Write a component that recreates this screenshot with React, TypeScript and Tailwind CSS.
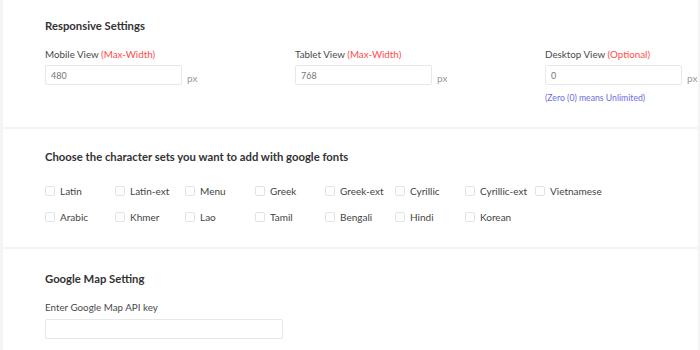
import React from "react";

const font = { fontFamily: 'Lato, "Noto Sans", sans-serif' };

function Field({ label, note, value, hint }: { label: string; note: string; value: string; hint?: string }) {
  return (
    <div className="w-[250px] shrink-0">
      <div className="text-[9.8px] leading-[16px] text-[#4a4a4a]">
        {label} <span className="text-[#ff4b4b]">{note}</span>
      </div>
      <div className="mt-[3px] flex items-end">
        <div className="h-[20px] w-[137px] rounded-[2px] border border-[#e8e8e8] bg-white pl-[5px] text-[9px] leading-[19px] text-[#777]">
          {value}
        </div>
        <span className="ml-[5px] text-[10px] leading-[14px] text-[#999]">px</span>
      </div>
      {hint && <div className="mt-[6px] text-[8.7px] leading-[14px] text-[#6d6de0]">{hint}</div>}
    </div>
  );
}

const row1 = ["Latin", "Latin-ext", "Menu", "Greek", "Greek-ext", "Cyrillic", "Cyrillic-ext", "Vietnamese"];
const row2 = ["Arabic", "Khmer", "Lao", "Tamil", "Bengali", "Hindi", "Korean"];

function Check({ label }: { label: string }) {
  return (
    <div className="flex w-[70px] shrink-0 items-center">
      <span className="h-[10px] w-[10px] rounded-[2px] border border-[#dfe3ea] bg-white" />
      <span className="ml-[5px] text-[10px] leading-[14px] text-[#444]">{label}</span>
    </div>
  );
}

export default function App() {
  return (
    <div style={font} className="h-[350px] w-[700px] overflow-hidden bg-[#f4f4f4] pl-[3px] pr-[2px]">
      <div className="flex flex-col gap-[2px]">
        <section className="h-[127px] bg-white pl-[42px] pt-[17px]">
          <h2 className="text-[11.3px] font-bold leading-[18px] text-[#333]">Responsive Settings</h2>
          <div className="mt-[11px] flex">
            <Field label="Mobile View" note="(Max-Width)" value="480" />
            <Field label="Tablet View" note="(Max-Width)" value="768" />
            <Field label="Desktop View" note="(Optional)" value="0" hint="(Zero (0) means Unlimited)" />
          </div>
        </section>
        <section className="h-[118px] bg-white pl-[42px] pt-[19px]">
          <h2 className="text-[11.3px] font-bold leading-[18px] text-[#333]">
            Choose the character sets you want to add with google fonts
          </h2>
          <div className="mt-[18px] flex">
            {row1.map((l) => (
              <Check key={l} label={l} />
            ))}
          </div>
          <div className="mt-[12px] flex">
            {row2.map((l) => (
              <Check key={l} label={l} />
            ))}
          </div>
        </section>
        <section className="h-[120px] bg-white pl-[42px] pt-[21px]">
          <h2 className="text-[11.3px] font-bold leading-[18px] text-[#333]">Google Map Setting</h2>
          <div className="mt-[11px] text-[9.8px] leading-[16px] text-[#4a4a4a]">Enter Google Map API key</div>
          <div className="mt-[4px] h-[20px] w-[238px] rounded-[2px] border border-[#e8e8e8] bg-white" />
        </section>
      </div>
    </div>
  );
}
